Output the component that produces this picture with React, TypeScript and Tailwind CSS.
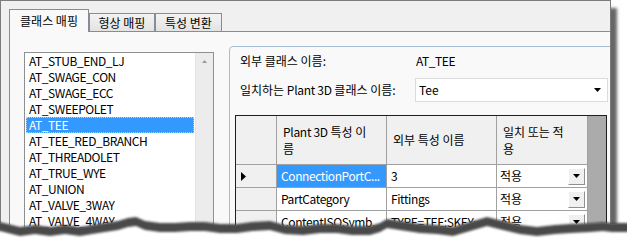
import React from 'react'

const items = [
  'AT_STUB_END_LJ',
  'AT_SWAGE_CON',
  'AT_SWAGE_ECC',
  'AT_SWEEPOLET',
  'AT_TEE',
  'AT_TEE_RED_BRANCH',
  'AT_THREADOLET',
  'AT_TRUE_WYE',
  'AT_UNION',
  'AT_VALVE_3WAY',
  'AT_VALVE_4WAY',
  'AT_VALVE_ANGLE',
]

const rows = [
  { name: 'ConnectionPortC...', ext: '3', mode: '적용', current: true },
  { name: 'PartCategory', ext: 'Fittings', mode: '적용' },
  { name: 'ContentISOSymb...', ext: 'TYPE=TEE;SKEY=...', mode: '적용' },
]

// torn paper edge (x, y) in page coords
const edge: [number, number][] = [
  [0, 223], [8, 225], [20, 228], [35, 226], [50, 228], [65, 226], [80, 228], [92, 226],
  [105, 224], [118, 222], [128, 219], [136, 218], [145, 222], [160, 224], [175, 224],
  [190, 223], [205, 223], [220, 225], [237, 225], [252, 223], [270, 222], [285, 226],
  [303, 227], [320, 225], [337, 225], [352, 227], [370, 227], [380, 224], [387, 220],
  [400, 222], [420, 225], [437, 226], [453, 228], [470, 223], [487, 218], [503, 222],
  [520, 226], [537, 228], [555, 226], [570, 225], [590, 224], [603, 223], [612, 224],
  [627, 224],
]

function edgePath(dy: number) {
  const top = 200
  const pts = edge.map(([x, y]) => `${x},${y - top + dy}`).join(' L')
  return `M-5,${edge[0][1] - top + dy} L${pts} L632,${edge[edge.length - 1][1] - top + dy} L632,60 L-5,60 Z`
}

function DropButton() {
  return (
    <div className="flex h-[17px] w-[17px] items-center justify-center border border-t-white border-l-white border-r-[#8f8f8f] border-b-[#8f8f8f] bg-[#f0f0f0]">
      <svg width="7" height="4" viewBox="0 0 7 4">
        <path d="M0 0 H7 L3.5 4 Z" fill="#000" />
      </svg>
    </div>
  )
}

export default function App() {
  return (
    <div className="relative h-[250px] w-[627px] overflow-hidden bg-white font-['Noto_Sans_CJK_KR',sans-serif] text-[12px] leading-[16px] text-black">
      <div className="h-[242px] w-[611px] overflow-hidden border border-[#7b7b7b] bg-[#f0f0f0] shadow-[6px_8px_3px_rgba(0,0,0,0.6)]">
        <div className="pl-[8px] pt-[8px]">
          {/* tabs */}
          <div className="flex h-[22px] items-end">
            <div className="relative z-10 -mb-px flex h-[23px] w-[80px] items-center justify-center border border-b-0 border-[#898c95] bg-[#f9f9f9] pb-[1px]">
              클래스 매핑
            </div>
            <div className="flex h-[18px] w-[66px] items-center justify-center border border-b-0 border-[#898c95] bg-[linear-gradient(#f3f3f3,#e3e3e3)]">
              형상 매핑
            </div>
            <div className="flex h-[18px] w-[67px] items-center justify-center border border-b-0 border-[#898c95] bg-[linear-gradient(#f3f3f3,#e3e3e3)]">
              특성 변환
            </div>
          </div>

          {/* tab page */}
          <div className="flex h-[230px] w-[640px] items-start gap-[15px] border border-[#898c95] bg-[#f9f9f9] pl-[14px] pt-[14px]">
            {/* class list */}
            <div className="mt-[6px] flex h-[200px] w-[190px] border border-[#8e8f8f] bg-white">
              <div className="flex-1 tracking-[-0.45px]">
                {items.map((it, i) => (
                  <div
                    key={it}
                    className={
                      i === 4
                        ? 'mx-[1px] h-[16px] border border-dotted border-[#a8d0ff] bg-[#3399ff] pl-[2px] leading-[14px] text-white'
                        : 'mx-[1px] h-[16px] pl-[3px]'
                    }
                  >
                    {it}
                  </div>
                ))}
              </div>
              <div className="w-[18px] border-l border-[#e4e4e4] bg-[#ececec]">
                <div className="flex h-[17px] items-center justify-center">
                  <svg width="5" height="3" viewBox="0 0 5 3">
                    <path d="M0 3 L2.5 0 L5 3 Z" fill="#9a9a9a" />
                  </svg>
                </div>
              </div>
            </div>

            {/* group box */}
            <div className="h-[220px] w-[400px] rounded-[4px] border border-[#a7bdd3] pl-[5px] pt-[6px]">
              <div className="ml-[5px] flex h-[16px]">
                <div className="w-[176px]">외부 클래스 이름:</div>
                <div className="tracking-[-0.45px]">AT_TEE</div>
              </div>
              <div className="ml-[5px] mt-[9px] flex items-center">
                <div className="w-[175px]">
                  일치하는 <span className="tracking-[-0.3px]">Plant 3D</span> 클래스 이름:
                </div>
                <div className="flex h-[24px] w-[193px] items-center justify-between border border-[#dcdcdc] bg-white pl-[3px] pr-[6px]">
                  <span>Tee</span>
                  <svg width="7" height="4" viewBox="0 0 7 4">
                    <path d="M0 0 H7 L3.5 4 Z" fill="#000" />
                  </svg>
                </div>
              </div>

              {/* property grid */}
              <div className="mt-[13px] flex h-[130px] w-[372px] border-x border-t border-[#1e1e1e] bg-[#ababab]">
                <div className="w-[352px]">
                  <div className="flex h-[49px] border-b border-[#a0a0a0] bg-[#f0f0f0]">
                    <div className="w-[41px] border-r border-[#a0a0a0]" />
                    <div className="flex w-[110px] flex-col justify-center border-r border-[#a0a0a0] pl-[6px] leading-[17px]">
                      <span className="whitespace-nowrap">
                        <span className="tracking-[-0.3px]">Plant 3D</span> 특성 이
                      </span>
                      <span>름</span>
                    </div>
                    <div className="flex w-[110px] items-center border-r border-[#a0a0a0] pl-[6px]">
                      외부 특성 이름
                    </div>
                    <div className="flex w-[91px] flex-col justify-center border-r border-[#a0a0a0] pl-[6px] leading-[17px]">
                      <span className="whitespace-nowrap">일치 또는 적</span>
                      <span>용</span>
                    </div>
                  </div>
                  {rows.map((r) => (
                    <div key={r.name} className="flex h-[23px] border-b border-[#a0a0a0]">
                      <div className="flex w-[41px] items-center border-r border-[#a0a0a0] bg-[#f0f0f0] pl-[5px]">
                        {r.current && (
                          <svg width="5" height="9" viewBox="0 0 5 9">
                            <path d="M0 0 L5 4.5 L0 9 Z" fill="#000" />
                          </svg>
                        )}
                      </div>
                      <div
                        className={
                          r.current
                            ? 'flex w-[110px] items-center overflow-hidden whitespace-nowrap border-r border-[#a0a0a0] bg-[#3399ff] pl-[4px] tracking-[-0.4px] text-white'
                            : 'flex w-[110px] items-center overflow-hidden whitespace-nowrap border-r border-[#a0a0a0] bg-white pl-[4px] tracking-[-0.4px]'
                        }
                      >
                        {r.name}
                      </div>
                      <div className="flex w-[110px] items-center overflow-hidden whitespace-nowrap border-r border-[#a0a0a0] bg-white pl-[4px] tracking-[-0.4px]">
                        {r.ext}
                      </div>
                      <div className="flex w-[91px] items-center justify-between border-r border-[#a0a0a0] bg-white pl-[3px] pr-[2px]">
                        <span>{r.mode}</span>
                        <DropButton />
                      </div>
                    </div>
                  ))}
                </div>
              </div>
            </div>
          </div>
        </div>
      </div>

      {/* torn edge */}
      <svg className="absolute left-0 top-[200px]" width="627" height="50" viewBox="0 0 627 50">
        <defs>
          <filter id="b1" x="-5%" y="-50%" width="110%" height="200%">
            <feGaussianBlur stdDeviation="1.3" />
          </filter>
        </defs>
        <path d={edgePath(0)} fill="#ffffff" />
        <path d={edgePath(-1)} fill="#4a4a4a" filter="url(#b1)" />
        <path d={edgePath(8)} fill="#ffffff" filter="url(#b1)" />
        <rect x="0" y="43" width="627" height="10" fill="#ffffff" />
      </svg>
    </div>
  )
}
